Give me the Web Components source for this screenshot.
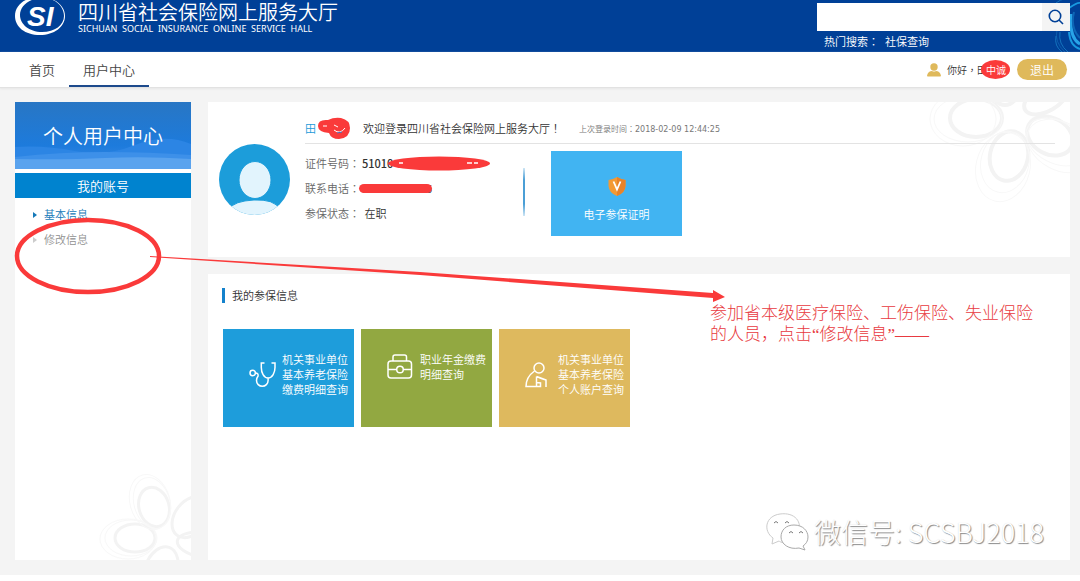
<!DOCTYPE html>
<html lang="zh-CN">
<head>
<meta charset="utf-8">
<meta name="viewport" content="width=device-width, initial-scale=1">
<title>四川省社会保险网上服务大厅</title>
<style>
html, body { margin: 0; }
body { background: #fff; color: #444; font: 350 11px/15px "Noto Sans CJK SC", "Noto Sans", sans-serif; }
</style>
</head>
<body>
<service-hall></service-hall>
<script>
function define(name, html) {
  const template = document.createElement('template');
  template.innerHTML = html;
  customElements.define(name, class extends HTMLElement {
    constructor() {
      super();
      this.attachShadow({ mode: 'open' }).append(template.content.cloneNode(true));
    }
  });
}

/* Full-width punctuation centred in its em box */
define('mid-punct', `<style>:host{display:inline;font-family:"Noto Sans CJK TC",sans-serif}</style><span lang="zh-TW"><slot></slot></span>`);

define('si-logo', `
<style>:host{display:block} svg{display:block}</style>
<svg width="52" height="36" viewBox="0 0 52 36" aria-hidden="true">
  <path fill="#fff" fill-rule="evenodd" d="M26-3C40-3 51 5 51 16S40 35 26 35C11 35 1 27 1 16S11-3 26-3ZM29-2C15-2 6 6 6 15s9 17 22 17c13 0 22-7 22-16S42-2 29-2Z"/>
  <text x="13" y="26" fill="#fff" font-family="Liberation Sans, sans-serif" font-size="28" font-weight="700" font-style="italic">SI</text>
</svg>`);

define('hall-header', `
<style>
:host{display:flex;position:relative;height:52px;background:#004097;color:#fff;justify-content:space-between;overflow:hidden}
.brand{display:flex;padding-left:14px;gap:12px}
h1{margin:0;padding-top:3px;font:350 20px/20px "Liberation Sans","Noto Sans CJK SC",sans-serif}
p{margin:0;font:9px/12px "Noto Sans",sans-serif;white-space:pre}
.find{position:relative;padding:3px 10px 0 0;width:253px}
form{display:flex;height:28px;margin:0}
input{flex:1;min-width:0;border:0;background:#fff;padding:0 8px;font:12px "Noto Sans CJK SC",sans-serif;outline:0}
button{width:28px;border:0;padding:0;background:#f4f4f4;display:grid;place-items:center}
.hot{display:flex;gap:6px;padding:2px 0 0 7px;line-height:16px}
a{color:inherit;text-decoration:none}
.swirl{position:absolute;right:0;top:0}
</style>
<svg class="swirl" width="30" height="52" viewBox="0 0 30 52" fill="none" aria-hidden="true">
  <g stroke="#1472bd"><path d="M6 3Q14-4 30-1M6 36Q4 46 12 52M10 32Q8 44 18 52"/><path d="M15 52Q4 42 7 30" opacity=".6"/></g>
  <path d="M19 8Q28 2 30 3M19 32Q20 46 30 49" stroke="#189ae0" stroke-width="2"/>
  <path d="M21 14Q19 38 30 44" stroke="#28a4e8" stroke-width="3"/>
  <path d="M24 12Q20 28 30 38" stroke="#0d66b5" stroke-width="2"/>
</svg>
<div class="brand"><si-logo></si-logo><div><h1>四川省社会保险网上服务大厅</h1><p>SICHUAN  SOCIAL  INSURANCE  ONLINE  SERVICE  HALL</p></div></div>
<div class="find">
  <form role="search" onsubmit="return false">
    <input type="search" aria-label="搜索">
    <button aria-label="搜索"><svg width="16" height="16" viewBox="0 0 16 16" fill="none" stroke="#004097" stroke-width="1.6"><circle cx="7" cy="7" r="5.7"/><path d="m11 11 4 4"/></svg></button>
  </form>
  <div class="hot"><span>热门搜索<mid-punct>：</mid-punct></span><a href="#">社保查询</a></div>
</div>`);

define('hall-nav', `
<style>
:host{display:flex;height:35px;background:#fff;border-bottom:1px solid #e2e2e2;box-shadow:0 1px 2px #e6e6e6;justify-content:space-between;padding:0 13px 0 15px;position:relative}
nav{display:flex}
nav a{padding:0 14px;font-size:13px;line-height:36px;height:33px;color:#444;text-decoration:none;border-bottom:2px solid transparent}
nav a.on{border-color:#1d4a8c}
.user{display:flex;align-items:center;font-size:10px;color:#333}
.user svg{margin-right:6px}
.name{position:relative;width:40px;white-space:nowrap}
.mask{position:absolute;left:4px;top:-2px;width:29px;height:19px;border-radius:50%;background:#fa3a3a}
.name b{position:absolute;left:9px;top:0;font-weight:350;color:#fff}
button{width:50px;height:21px;padding:0;border:0;border-radius:11px;background:#dfb95b;color:#fff;font:350 12px/20px "Noto Sans CJK SC",sans-serif}
</style>
<nav><a href="#">首页</a><a class="on" href="#">用户中心</a></nav>
<div class="user">
  <svg width="14" height="14" viewBox="0 0 14 14" fill="#dfb95b" aria-hidden="true"><circle cx="7" cy="4" r="3.700"/><path d="M1 13.500c-.6 0-1-.6-.9-1.300C.6 9.600 3 8 5 8c1.300.8 2.700.8 4 0 2 0 4.400 1.600 4.900 4.200.1.700-.3 1.300-.9 1.300Z"/></svg>
  <span>你好<mid-punct>，</mid-punct></span><span class="name">田<span class="mask"></span><b>中诚</b></span>
  <button>退出</button>
</div>`);

define('side-menu', `
<style>
:host{display:block;position:relative;background:#fff;overflow:hidden}
.banner{position:relative;height:67px;background:linear-gradient(#2876c4,#1d7bdc 65%,#3889e4)}
.banner svg{position:absolute;inset:0;width:100%;height:100%}
h2{position:relative;margin:0;color:#fff;font-size:20px;font-weight:350;line-height:67px;text-align:center}
h3{margin:4px 0 0;background:#0083cf;color:#fff;font-size:13px;font-weight:350;line-height:25px;text-align:center}
ul{list-style:none;margin:0;padding:4px 0 0 18px}
li a{display:flex;align-items:center;gap:7px;line-height:25px;color:#909090;text-decoration:none}
li a::before{content:"";border:3px solid transparent;border-left:4px solid #ccc;border-right:0}
li a.on{color:#1478b8}
li a.on::before{border-left-color:#1478b8}
.flower{position:absolute;right:0;bottom:0}
</style>
<div class="banner">
  <svg viewBox="0 0 176 67" preserveAspectRatio="none" aria-hidden="true"><path fill="#2c85e4" d="M0 45Q30 43 60 49T120 43T176 42V67H0Z"/><path fill="#3d90e9" d="M0 55Q45 50 90 50T176 53V67H0Z"/><path fill="#5aa3ee" d="M0 57Q50 58 90 56T176 57V67H0Z"/></svg>
  <h2>个人用户中心</h2>
</div>
<h3>我的账号</h3>
<ul><li><a class="on" href="#">基本信息</a></li><li><a href="#">修改信息</a></li></ul>
<svg class="flower" width="96" height="90" viewBox="95 470 96 90" fill="none" stroke="#f3f3f3" aria-hidden="true">
  <g stroke-width="3"><ellipse cx="154" cy="507" rx="15" ry="20" transform="rotate(-16 154 507)"/><ellipse cx="135" cy="538" rx="20" ry="14"/><ellipse cx="191" cy="517" rx="16" ry="23" transform="rotate(38 191 517)"/><ellipse cx="202" cy="545" rx="25" ry="12" transform="rotate(10 202 545)"/><ellipse cx="161" cy="570" rx="16" ry="24" transform="rotate(20 161 570)"/></g>
  <g stroke="#f8f8f8"><ellipse cx="152" cy="503" rx="18" ry="26" transform="rotate(-16 152 503)"/><ellipse cx="150" cy="502" rx="20" ry="28" transform="rotate(-16 150 502)"/><ellipse cx="131" cy="538" rx="26" ry="18"/><ellipse cx="128" cy="539" rx="28" ry="20"/></g>
</svg>`);

define('detail-row', `
<style>:host{display:flex;line-height:25px;height:25px;color:#666}.v{display:flex;color:#333;margin-left:2px}</style>
<span><slot name="label"></slot><mid-punct>：</mid-punct></span><span class="v"><slot></slot></span>`);

define('profile-panel', `
<style>
:host{display:flex;position:relative;gap:15px;background:#fff;padding:12px 15px 21px 11px;overflow:hidden}
.avatar{flex:none;margin-top:30px;width:71px;height:71px}
.body{flex:1;position:relative}
.flower{position:absolute;right:0;top:0}
header{display:flex;height:29px;align-items:center;border-bottom:1px solid #e3e3e3;white-space:nowrap}
.who{width:58px;color:#1b9ad9}
.hi{color:#333}
time{font:8px/15px "DejaVu Sans",sans-serif}
.last{font-size:8px;color:#777;margin-left:18px}
.info{display:flex;padding-top:7px}
.rows{width:218px}
.rows b{font-weight:500}
.phone{display:flex;justify-content:space-between;width:70px}
.bar{width:2px;height:48px;margin-top:17px;background:linear-gradient(#cfe6f5,#4b9fd6 25%,#4b9fd6 75%,#cfe6f5)}
.cert{display:flex;flex-direction:column;align-items:center;gap:11px;width:131px;height:85px;box-sizing:border-box;margin-left:26px;padding-top:26px;background:#41b4f2;color:#fff;text-decoration:none}
</style>
<svg class="flower" width="150" height="110" viewBox="920 102 150 110" fill="none" stroke="#f3f3f3" aria-hidden="true">
  <g stroke-width="4"><ellipse cx="976" cy="118" rx="26" ry="19"/><ellipse cx="1009" cy="156" rx="19" ry="25" transform="rotate(12 1009 156)"/><ellipse cx="1050" cy="136" rx="24" ry="18" transform="rotate(28 1050 136)"/><ellipse cx="1046" cy="98" rx="24" ry="13" transform="rotate(-30 1046 98)"/><ellipse cx="1005" cy="85" rx="15" ry="20"/></g>
  <g stroke="#f8f8f8"><ellipse cx="968" cy="119" rx="34" ry="23"/><ellipse cx="963" cy="119" rx="33" ry="27"/><ellipse cx="1005" cy="162" rx="24" ry="31" transform="rotate(14 1005 162)"/><ellipse cx="1003" cy="167" rx="27" ry="35" transform="rotate(14 1003 167)"/><ellipse cx="1056" cy="142" rx="32" ry="21" transform="rotate(28 1056 142)"/><ellipse cx="1060" cy="146" rx="35" ry="24" transform="rotate(28 1060 146)"/></g>
</svg>
<svg class="avatar" viewBox="0 0 71 71" aria-hidden="true"><clipPath id="c"><circle cx="35.500" cy="35.500" r="35.500"/></clipPath><g clip-path="url(#c)"><path fill="#1c9dda" d="M0 0h71v71H0z"/><path fill="#e2f4fd" stroke="#1c9dda" d="M10 65Q15 57 35 56T61 65V76H10Z"/><ellipse cx="36" cy="36" rx="16" ry="18.500" fill="#e2f4fd" stroke="#1c9dda"/></g></svg>
<div class="body">
  <header><span class="who">田</span><span class="hi">欢迎登录四川省社会保险网上服务大厅<mid-punct>！</mid-punct></span><span class="last">上次登录时间<mid-punct>：</mid-punct><time>2018-02-09 12:44:25</time></span></header>
  <div class="info">
    <div class="rows">
      <detail-row><span slot="label">证件号码</span><b>51010</b></detail-row>
      <detail-row><span slot="label">联系电话</span><span class="phone"><span>1</span><span>26</span></span></detail-row>
      <detail-row><span slot="label">参保状态</span><span>&nbsp;在职</span></detail-row>
    </div>
    <div class="bar"></div>
    <a class="cert" href="#">
      <svg width="18" height="19" viewBox="0 0 18 19" aria-hidden="true"><path fill="#f39a34" d="M9 0Q13 2.500 17.500 3V9Q17 16 9 19Q1 16 .5 9V3Q5 2.500 9 0Z"/><path fill="#e8832a" d="M9 0Q13 2.500 17.500 3V9Q17 16 9 19Z"/><path fill="none" stroke="#fff" stroke-width="1.800" d="m5.500 4.500 3.500 8 3.500-8"/></svg>
      <span>电子参保证明</span>
    </a>
  </div>
</div>`);

define('service-tile', `
<style>
:host{display:block;width:131px;height:98px;background:var(--tile)}
a{display:flex;align-items:center;gap:6px;padding:23px 0 0 26px;color:#fff;line-height:15px;text-decoration:none;white-space:nowrap}
::slotted(svg){flex:none;fill:none;stroke:#fff;stroke-width:1.500}
</style>
<a href="#"><slot name="icon"></slot><span><slot></slot></span></a>`);

define('insurance-panel', `
<style>
:host{display:block;background:#fff;padding:14px 15px}
h2{margin:0 0 0 -1px;padding-left:7px;border-left:3px solid #1482cc;color:#333;font-size:11px;font-weight:350;line-height:15px}
.tiles{display:flex;gap:7px;margin-top:26px}
</style>
<h2>我的参保信息</h2>
<div class="tiles">
  <service-tile style="--tile:#1e9ddb"><svg slot="icon" width="27" height="26" viewBox="0 0 27 26"><circle cx="3.700" cy="11" r="2.700"/><path d="M6.500 11q3 0 2.600 3-1.600 2-1.600 4.500a5.800 5.800 0 0 0 11.600 0V16M15.500 1h-3.200v4.500c0 5 2.500 10.500 6.800 10.500S26 10.500 26 5.500V1h-3.500"/></svg>机关事业单位<br>基本养老保险<br>缴费明细查询</service-tile>
  <service-tile style="--tile:#92a841"><svg slot="icon" width="27" height="26" viewBox="0 0 27 26"><rect x="1" y="7" width="23.500" height="17" rx="3"/><path d="M6 7V3q0-2 2-2h9.500q2 0 2 2v4M1 15.500h8.500m7 0h8"/><circle cx="13" cy="15.500" r="3.300"/></svg>职业年金缴费<br>明细查询</service-tile>
  <service-tile style="--tile:#deb95e"><svg slot="icon" width="27" height="26" viewBox="0 0 27 26"><circle cx="14" cy="6" r="5"/><path d="M9.500 9Q1 15 1 24.500h10.500v-4M11.500 14.500q5 2 9.500 3.500V25M11.500 14.500v6l4 .5v3.500h-4"/></svg>机关事业单位<br>基本养老保险<br>个人账户查询</service-tile>
</div>`);

define('mark-layer', `
<style>
:host{position:absolute;inset:0;pointer-events:none;overflow:hidden}
svg{position:absolute;left:0;top:0}
p{position:absolute;left:710px;top:303px;margin:0;color:#e83a40;font:300 17px/21px "Liberation Serif","Noto Sans CJK SC",serif;white-space:nowrap}
</style>
<svg width="730" height="310" viewBox="0 0 730 310" fill="#fa3a3a" aria-hidden="true">
  <ellipse cx="88" cy="256" rx="71" ry="36" fill="none" stroke="#fa3a3a" stroke-width="4.500"/>
  <path d="M150 256 420 272 713 293V290L725 297 713 302V298L420 275 150 257Z"/>
  <path d="M318 126q0-7 10-6 6-3 13-2 9 2 9 10 0 10-11 11-8 0-10-6-11-1-11-7Z"/>
  <g fill="none" stroke="#fff"><path d="M323 126h4m7-1 4 2M334 130q6 5 11-2"/><path stroke="#446fc0" d="m337 133 5-1"/></g>
  <ellipse cx="439" cy="163.500" rx="51" ry="7"/>
  <path stroke="#fff" stroke-width="1.500" d="M399 163h4m64 0h5m2 0h4"/>
  <rect x="359" y="184" width="73" height="9" rx="5"/>
</svg>
<p>参加省本级医疗保险、工伤保险、失业保险<br>的人员，点击“修改信息”——</p>`);

define('account-mark', `
<style>
:host{position:absolute;right:36px;bottom:29px;display:flex;align-items:center;gap:5px;font-size:27px;font-weight:300;line-height:40px;color:#fff;text-shadow:1px 1px 1px #888,0 0 1px #ddd;white-space:nowrap}
</style>
<svg width="44" height="38" viewBox="0 0 44 38" fill="#fff" stroke="#ccc" aria-hidden="true"><path d="M8 25C-2 18 0 3 15 1s23 8 18 20-17 9-19 7l-7 3Z"/><path stroke="#aaa" d="M29 12c9 0 14 6 14 12 0 4-2 7-5 9l2 4-6-2c-10 2-18-4-18-11s5-12 13-12Z"/><path fill="none" stroke="#777" d="M9 10q2-3 4 0m7 0q2-3 4 0M24 20q2-3 4 0m6 0q2-3 4 0"/></svg>
<span>微信号: SCSBJ2018</span>`);

define('service-hall', `
<style>
:host{display:flex;position:relative;flex-direction:column;min-height:100vh;box-sizing:border-box;padding-bottom:6px;overflow:hidden}
main{flex:1;display:grid;grid-template-columns:176px minmax(0,1fr);gap:17px;background:#f4f4f4;padding:14px 10px 15px 15px}
.content{display:flex;flex-direction:column;gap:17px}
insurance-panel{flex:1}
</style>
<hall-header></hall-header>
<hall-nav></hall-nav>
<main><side-menu></side-menu><div class="content"><profile-panel></profile-panel><insurance-panel></insurance-panel></div></main>
<mark-layer></mark-layer>
<account-mark></account-mark>`);
</script>
</body>
</html>
